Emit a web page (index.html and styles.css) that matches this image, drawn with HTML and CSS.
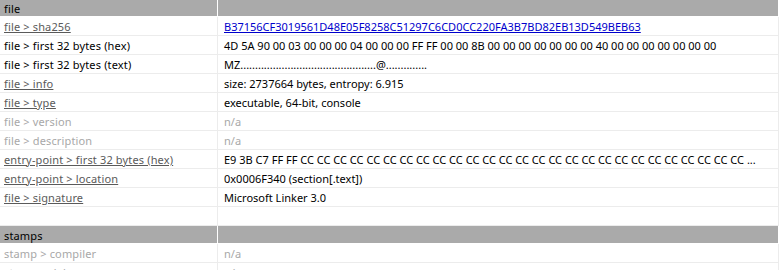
FILE: index.html
```html
<!DOCTYPE html>
<html>
<head>
<meta charset="utf-8">
<link rel="stylesheet" href="styles.css">
</head>
<body>
<div class="props">
  <div class="row group first"><div class="key">file</div><div class="val"></div></div>
  <div class="row"><div class="key"><span class="link">file &gt; sha256</span></div><div class="val"><span class="hash">B37156CF3019561D48E05F8258C51297C6CD0CC220FA3B7BD82EB13D549BEB63</span></div></div>
  <div class="row"><div class="key">file &gt; first 32 bytes (hex)</div><div class="val">4D 5A 90 00 03 00 00 00 04 00 00 00 FF FF 00 00 8B 00 00 00 00 00 00 00 40 00 00 00 00 00 00 00</div></div>
  <div class="row"><div class="key">file &gt; first 32 bytes (text)</div><div class="val">MZ..............................................@..............</div></div>
  <div class="row"><div class="key"><span class="link">file &gt; info</span></div><div class="val">size: 2737664 bytes, entropy: 6.915</div></div>
  <div class="row"><div class="key"><span class="link">file &gt; type</span></div><div class="val">executable, 64-bit, console</div></div>
  <div class="row na"><div class="key">file &gt; version</div><div class="val">n/a</div></div>
  <div class="row na"><div class="key">file &gt; description</div><div class="val">n/a</div></div>
  <div class="row"><div class="key"><span class="link">entry-point &gt; first 32 bytes (hex)</span></div><div class="val">E9 3B C7 FF FF CC CC CC CC CC CC CC CC CC CC CC CC CC CC CC CC CC CC CC CC CC CC CC CC CC CC CC ...</div></div>
  <div class="row"><div class="key"><span class="link">entry-point &gt; location</span></div><div class="val">0x0006F340 (section[.text])</div></div>
  <div class="row"><div class="key"><span class="link">file &gt; signature</span></div><div class="val">Microsoft Linker 3.0</div></div>
  <div class="row"><div class="key"></div><div class="val"></div></div>
  <div class="row group"><div class="key">stamps</div><div class="val"></div></div>
  <div class="row na"><div class="key">stamp &gt; compiler</div><div class="val">n/a</div></div>
  <div class="row na"><div class="key">stamp &gt; debugger</div><div class="val">n/a</div></div>
</div>
</body>
</html>
```

FILE: styles.css
```css
html, body {
  margin: 0;
  padding: 0;
  background: #ffffff;
}

body {
  font-family: "Noto Sans", "Open Sans", sans-serif;
  font-size: 11px;
  color: #000000;
}

.props {
  width: 779px;
  display: flex;
  flex-direction: column;
}

.row {
  display: grid;
  grid-template-columns: 218px 561px;
  height: 19px;
}

.key, .val {
  box-sizing: border-box;
  border-right: 1px solid #ececec;
  border-bottom: 1px solid #ececec;
  padding-top: 1px;
  line-height: 18px;
  white-space: nowrap;
  overflow: hidden;
}

.key { padding-left: 4px; letter-spacing: 0.15px; }
.val { padding-left: 6px; }

.row.group { height: 18px; }
.row.group.first { margin-top: -1px; }

.group .key, .group .val {
  background: #aaaaaa;
  border-right-color: #ffffff;
  border-bottom-color: #ffffff;
  padding-top: 1px;
  line-height: 17px;
}

.group.first .key { padding-top: 1px; }

.link {
  color: #5a5a5a;
  text-decoration: underline;
}

.hash {
  color: #0000cc;
  text-decoration: underline;
}

.na .key, .na .val { color: #a8a8a8; }
```
